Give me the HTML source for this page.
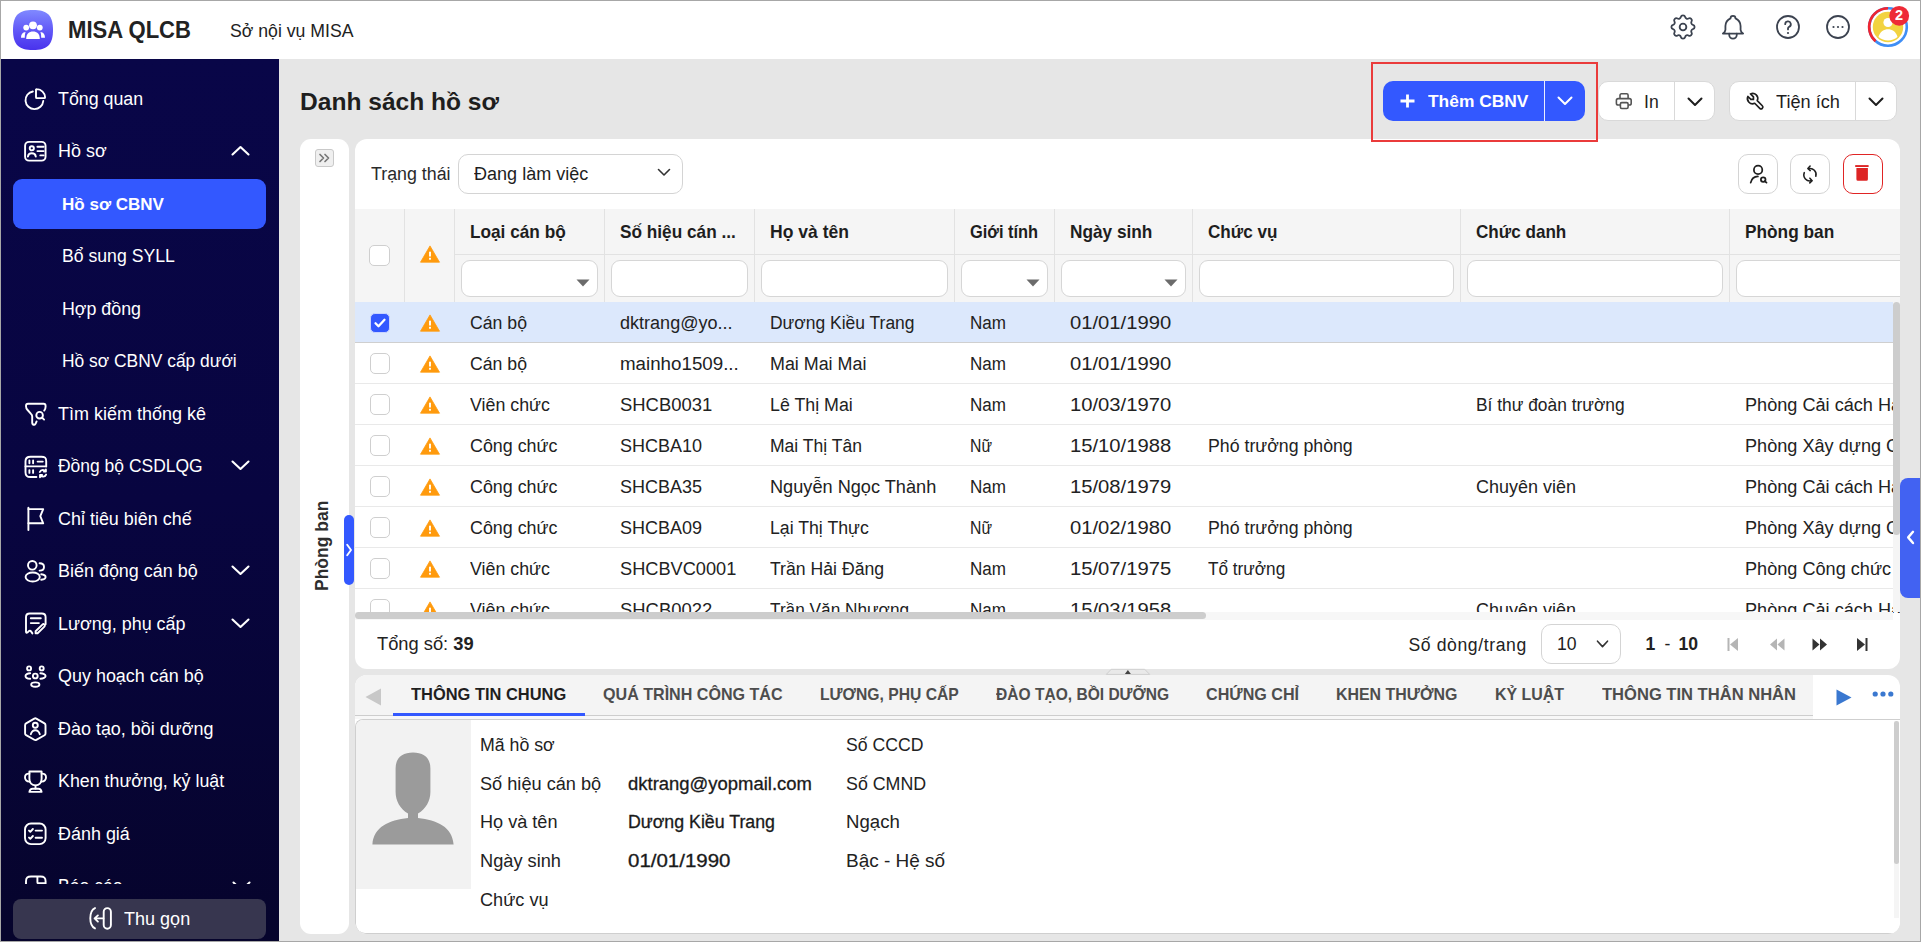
<!DOCTYPE html>
<html><head><meta charset="utf-8"><style>
html,body{margin:0;padding:0;}
body{width:1921px;height:942px;position:relative;overflow:hidden;background:#a7a7a7;font-family:"Liberation Sans",sans-serif;}
.a{position:absolute;box-sizing:border-box;}
.t{position:absolute;white-space:nowrap;line-height:1;}
svg.a{overflow:visible;}
</style></head><body>
<div class="a" style="left:1px;top:1px;width:1919px;height:940px;background:#e6e6e6;"></div>
<div class="a" style="left:1px;top:1px;width:1919px;height:58px;background:#ffffff;"></div>
<div class="a" style="left:1px;top:59px;width:278px;height:882px;background:linear-gradient(180deg,#090648 0%,#080540 50%,#06042c 100%);"></div>
<svg class="a" style="left:13px;top:10px;" width="40" height="40" viewBox="0 0 40 40"><defs><linearGradient id="lg" x1="0" y1="0" x2="0" y2="1"><stop offset="0" stop-color="#8089ff"/><stop offset="0.6" stop-color="#5c50f6"/><stop offset="1" stop-color="#4932ec"/></linearGradient></defs><path d="M20 0C5.5 0 0 5.5 0 20S5.5 40 20 40 40 34.5 40 20 34.5 0 20 0Z" fill="url(#lg)"/></svg>
<svg class="a" style="left:13px;top:10px;" width="40" height="40" viewBox="0 0 40 40"><g fill="#fff"><circle cx="20" cy="15.3" r="3.9"/><circle cx="13.2" cy="17.6" r="2.9"/><circle cx="26.8" cy="17.6" r="2.9"/><path d="M13.2 29 C13.2 23.5 16 21.4 20 21.4 C24 21.4 26.8 23.5 26.8 29 Z"/><path d="M8 27.8 C8 24.4 9.4 22.4 12.6 22 C12 23.5 11.8 25.4 11.8 27.8 Z"/><path d="M32 27.8 C32 24.4 30.6 22.4 27.4 22 C28 23.5 28.2 25.4 28.2 27.8 Z"/></g></svg>
<div class="t" style="left:68.3px;top:18.93px;font-size:23px;font-weight:700;color:#222;transform:scaleX(0.9593);transform-origin:0 0;">MISA QLCB</div>
<div class="t" style="left:229.5px;top:21.76px;font-size:18px;font-weight:400;color:#222;transform:scaleX(0.9812);transform-origin:0 0;">Sở nội vụ MISA</div>
<svg class="a" style="left:1671px;top:15px;" width="24" height="24" viewBox="2.7 2.7 18.6 18.6"><g fill="none" stroke="#3c4350" stroke-width="1.4" stroke-linecap="round" stroke-linejoin="round"><path d="M10.325 4.317c.426 -1.756 2.924 -1.756 3.35 0a1.724 1.724 0 0 0 2.573 1.066c1.543 -.94 3.31 .826 2.37 2.37a1.724 1.724 0 0 0 1.065 2.572c1.756 .426 1.756 2.924 0 3.35a1.724 1.724 0 0 0 -1.066 2.573c.94 1.543 -.826 3.31 -2.37 2.37a1.724 1.724 0 0 0 -2.572 1.065c-.426 1.756 -2.924 1.756 -3.35 0a1.724 1.724 0 0 0 -2.573 -1.066c-1.543 .94 -3.31 -.826 -2.37 -2.37a1.724 1.724 0 0 0 -1.065 -2.572c-1.756 -.426 -1.756 -2.924 0 -3.35a1.724 1.724 0 0 0 1.066 -2.573c-.94 -1.543 .826 -3.31 2.37 -2.37c1 .608 2.296 .07 2.572 -1.065z"/><circle cx="12" cy="12" r="2.6"/></g></svg>
<svg class="a" style="left:1722px;top:15px;" width="22" height="24.5" viewBox="3.3 2.3 17.4 19.4"><g fill="none" stroke="#3c4350" stroke-width="1.42" stroke-linejoin="round" stroke-linecap="round"><path d="M10 5a2 2 0 1 1 4 0a7 7 0 0 1 4 6v3a4 4 0 0 0 2 3h-16a4 4 0 0 0 2 -3v-3a7 7 0 0 1 4 -6"/><path d="M9 17v1a3 3 0 0 0 6 0v-1"/></g></svg>
<svg class="a" style="left:1776px;top:15px;" width="24" height="24" viewBox="0 0 24 24"><g fill="none" stroke="#3c4350" stroke-width="1.8" stroke-linecap="round"><circle cx="12" cy="12" r="11"/><path d="M9.2 9.2 a2.8 2.8 0 1 1 3.9 2.6 c-0.8 0.4 -1.1 1 -1.1 1.8 v0.8"/></g><circle cx="12" cy="18" r="1.1" fill="#3c4350"/></svg>
<svg class="a" style="left:1826px;top:15px;" width="24" height="24" viewBox="0 0 24 24"><circle cx="12" cy="12" r="11" fill="none" stroke="#3c4350" stroke-width="1.8"/><g fill="#3c4350"><circle cx="7.5" cy="12" r="1.1"/><circle cx="12" cy="12" r="1.1"/><circle cx="16.5" cy="12" r="1.1"/></g></svg>
<svg class="a" style="left:1867px;top:6px;" width="42" height="42" viewBox="0 0 42 42"><circle cx="21" cy="21" r="18.8" fill="none" stroke="#3f8ef5" stroke-width="2.6"/><path d="M21 2.2 A18.8 18.8 0 0 0 8.6 35.2" fill="none" stroke="#f02530" stroke-width="2.6"/><circle cx="21" cy="21" r="15.2" fill="#f2d340"/><circle cx="21" cy="16.5" r="4.6" fill="#fff"/><path d="M11.5 31 C13 25.5 17 23.3 21 23.3 C25 23.3 29 25.5 30.5 31 A15 15 0 0 1 11.5 31 Z" fill="#fff"/><circle cx="32.2" cy="9.8" r="9.9" fill="#ee2a37"/></svg>
<div class="t" style="left:1895px;top:8.33px;font-size:14.5px;font-weight:700;color:#fff;">2</div>
<div class="a" style="left:13px;top:179px;width:253px;height:50px;border-radius:9px;background:#3358ff;"></div>
<div class="t" style="left:58px;top:90.70px;font-size:17.6px;font-weight:400;color:#fff;transform:scaleX(1.0122);transform-origin:0 0;">Tổng quan</div>
<div class="t" style="left:58px;top:143.20px;font-size:17.6px;font-weight:400;color:#fff;transform:scaleX(1.02);transform-origin:0 0;">Hồ sơ</div>
<div class="t" style="left:61.6px;top:196.12px;font-size:17.1px;font-weight:700;color:#fff;transform:scaleX(0.9958);transform-origin:0 0;">Hồ sơ CBNV</div>
<div class="t" style="left:62.2px;top:248.20px;font-size:17.6px;font-weight:400;color:#fff;transform:scaleX(1.0026);transform-origin:0 0;">Bổ sung SYLL</div>
<div class="t" style="left:62.2px;top:300.70px;font-size:17.6px;font-weight:400;color:#fff;transform:scaleX(1.0115);transform-origin:0 0;">Hợp đồng</div>
<div class="t" style="left:62.2px;top:353.20px;font-size:17.6px;font-weight:400;color:#fff;transform:scaleX(0.9892);transform-origin:0 0;">Hồ sơ CBNV cấp dưới</div>
<div class="t" style="left:58px;top:405.70px;font-size:17.6px;font-weight:400;color:#fff;transform:scaleX(1.0224);transform-origin:0 0;">Tìm kiếm thống kê</div>
<div class="t" style="left:58px;top:458.20px;font-size:17.6px;font-weight:400;color:#fff;transform:scaleX(0.9926);transform-origin:0 0;">Đồng bộ CSDLQG</div>
<div class="t" style="left:58px;top:510.70px;font-size:17.6px;font-weight:400;color:#fff;transform:scaleX(1.02);transform-origin:0 0;">Chỉ tiêu biên chế</div>
<div class="t" style="left:58px;top:563.20px;font-size:17.6px;font-weight:400;color:#fff;transform:scaleX(1.02);transform-origin:0 0;">Biến động cán bộ</div>
<div class="t" style="left:58px;top:615.70px;font-size:17.6px;font-weight:400;color:#fff;transform:scaleX(1.02);transform-origin:0 0;">Lương, phụ cấp</div>
<div class="t" style="left:58px;top:668.20px;font-size:17.6px;font-weight:400;color:#fff;transform:scaleX(1.02);transform-origin:0 0;">Quy hoạch cán bộ</div>
<div class="t" style="left:58px;top:720.70px;font-size:17.6px;font-weight:400;color:#fff;transform:scaleX(1.02);transform-origin:0 0;">Đào tạo, bồi dưỡng</div>
<div class="t" style="left:58px;top:773.20px;font-size:17.6px;font-weight:400;color:#fff;transform:scaleX(1.0121);transform-origin:0 0;">Khen thưởng, kỷ luật</div>
<div class="t" style="left:58px;top:825.70px;font-size:17.6px;font-weight:400;color:#fff;transform:scaleX(1.02);transform-origin:0 0;">Đánh giá</div>
<div class="a" style="left:1px;top:59px;width:278px;height:825px;overflow:hidden;">
<div class="t" style="left:57px;top:819.20px;font-size:17.6px;font-weight:400;color:#fff;">Báo cáo</div>
<svg class="a" style="left:22px;top:814.1px;" width="24" height="24" viewBox="0 0 24 24"><g fill="none" stroke="#fff" stroke-width="1.9" stroke-linecap="round" stroke-linejoin="round"><path d="M3 24 V8.2 C3 4.4 4.6 3.5 8 3.5 H17.6 C21 3.5 22.6 4.4 22.6 8.2 V24"/><path d="M14.4 4 V9.2 C14.4 9.8 14.8 10.2 15.4 10.2 H22"/></g></svg>
<svg class="a" style="left:231px;top:821.6px;" width="19" height="11" viewBox="0 0 19 11"><path d="M1.5 1.5 L9.5 9 L17.5 1.5" fill="none" stroke="#fff" stroke-width="2" stroke-linecap="round" stroke-linejoin="round"/></svg>
</div>
<svg class="a" style="left:231px;top:145.1px;" width="19" height="11" viewBox="0 0 19 11"><path d="M1.5 9.5 L9.5 2 L17.5 9.5" fill="none" stroke="#fff" stroke-width="2.1" stroke-linecap="round" stroke-linejoin="round"/></svg>
<svg class="a" style="left:231px;top:460.1px;" width="19" height="11" viewBox="0 0 19 11"><path d="M1.5 1.5 L9.5 9 L17.5 1.5" fill="none" stroke="#fff" stroke-width="2.1" stroke-linecap="round" stroke-linejoin="round"/></svg>
<svg class="a" style="left:231px;top:565.1px;" width="19" height="11" viewBox="0 0 19 11"><path d="M1.5 1.5 L9.5 9 L17.5 1.5" fill="none" stroke="#fff" stroke-width="2.1" stroke-linecap="round" stroke-linejoin="round"/></svg>
<svg class="a" style="left:231px;top:617.6px;" width="19" height="11" viewBox="0 0 19 11"><path d="M1.5 1.5 L9.5 9 L17.5 1.5" fill="none" stroke="#fff" stroke-width="2.1" stroke-linecap="round" stroke-linejoin="round"/></svg>
<svg class="a" style="left:23px;top:85.6px;" width="24" height="24" viewBox="0 0 24 24"><g fill="none" stroke="#fff" stroke-width="1.9" stroke-linecap="round" stroke-linejoin="round"><path d="M9.85 5.44 A8.9 8.9 0 1 0 20.27 14.98"/><path d="M13 3.5 V11.2 a0.9 0.9 0 0 0 0.9 0.9 H21.2 a0.9 0.9 0 0 0 0.9-0.9 A8.6 8.6 0 0 0 13.9 3.1 a0.9 0.9 0 0 0-0.9 0.4z"/></g></svg>
<svg class="a" style="left:23px;top:138.1px;" width="24" height="24" viewBox="0 0 24 24"><g fill="none" stroke="#fff" stroke-width="1.9" stroke-linecap="round" stroke-linejoin="round"><rect x="2.1" y="3.85" width="20.45" height="18.8" rx="4"/><circle cx="8.8" cy="10.3" r="2.1"/><path d="M4.9 18.6 C5.2 16.4 6.8 15.3 8.85 15.3 S12.5 16.4 12.8 18.6"/><path d="M14.4 8.8h6.2M14.4 13.1h6.2M17.3 17.4h3.3"/></g></svg>
<svg class="a" style="left:23px;top:400.6px;" width="24" height="24" viewBox="0 0 24 24"><g fill="none" stroke="#fff" stroke-width="1.9" stroke-linecap="round" stroke-linejoin="round"><path d="M13.6 20.4 C12.8 22.6 12.2 23.8 11.4 23.8 C10 23.8 9.2 22.8 9.2 21.4 V15.4 C9.2 14.4 8.8 13.6 8 12.8 L4.6 9 C3.6 7.9 3 6.8 3 5.2 V5 C3 3.7 3.8 2.8 5 2.8 H20.6 C21.8 2.8 22.6 3.7 22.6 5 V5.4 C22.6 7 22.2 8.4 21.2 9.6"/><circle cx="16.6" cy="14.2" r="3.3"/><path d="M19.2 16.8 L21.1 18.6"/></g></svg>
<svg class="a" style="left:23px;top:453.1px;" width="24" height="24" viewBox="0 0 24 24"><g fill="none" stroke="#fff" stroke-width="1.9" stroke-linecap="round" stroke-linejoin="round"><path d="M13.4 24.0 H7.4 C4 24 2.5 22.5 2.5 19.2 V8.2 C2.5 4.6 4.2 3.7 7.6 3.7 H18.4 C21.8 3.7 23.2 4.6 23.2 8.2 V13.4"/><path d="M2.5 13.4 H23.2"/><path d="M6.4 7.4v2.8M10.1 7.4v2.8M14.6 8.6h5.2M6.4 17.1v2.8M10.1 17.1v2.8"/><path d="M16.8 19.0 C17.4 17.6 18.4 17 19.8 17 C21 17 21.9 17.4 22.6 18.2 M22.9 16.4 V18.6 H20.8"/><path d="M23.1 21.6 C22.5 23 21.5 23.6 20.1 23.6 C18.9 23.6 18 23.2 17.3 22.4 M17 24.2 V22 H19.1"/></g></svg>
<svg class="a" style="left:23px;top:505.6px;" width="24" height="24" viewBox="0 0 24 24"><g fill="none" stroke="#fff" stroke-width="1.9" stroke-linecap="round" stroke-linejoin="round"><path d="M5.4 24V1.8"/><path d="M5.4 3.1H20.2L17.3 10.2L20.2 17.3H5.4"/></g></svg>
<svg class="a" style="left:23px;top:558.1px;" width="24" height="24" viewBox="0 0 24 24"><g fill="none" stroke="#fff" stroke-width="1.9" stroke-linecap="round" stroke-linejoin="round"><circle cx="9.3" cy="7.3" r="4.3"/><ellipse cx="9.7" cy="19.0" rx="7.1" ry="4.5"/><path d="M16.6 5.2 C19.4 5.2 21 6.6 21 8.9 C21 11.2 19.4 12.6 16.6 12.6"/><path d="M18.2 16.2 C21.2 16.6 22.6 17.6 22.6 19.0 C22.6 20.4 21.2 21.4 18.2 21.8"/></g></svg>
<svg class="a" style="left:23px;top:610.6px;" width="24" height="24" viewBox="0 0 24 24"><g fill="none" stroke="#fff" stroke-width="1.9" stroke-linecap="round" stroke-linejoin="round"><path d="M22.6 13.2 V6.0 C22.6 3.4 21.4 2.5 18.8 2.5 H6.8 C4.2 2.5 3 3.4 3 6.0 V20.6 C3 21.8 3.6 22.2 4.4 21.6 L5.8 20.2 C6.6 19.4 7.6 19.6 8.2 20.6 L9.4 22.4"/><path d="M7.8 7.3h10M7.8 12.1h8.1"/><path d="M14.6 22.2 L21.4 15.6 C22 15 22 14.2 21.4 13.6 C20.8 13 20 13 19.4 13.6 L12.6 20.2 V22.2 Z"/></g></svg>
<svg class="a" style="left:23px;top:663.1px;" width="24" height="24" viewBox="0 0 24 24"><g fill="none" stroke="#fff" stroke-width="1.9" stroke-linecap="round" stroke-linejoin="round"><circle cx="6.1" cy="5.4" r="2.0"/><circle cx="18.7" cy="5.4" r="2.0"/><circle cx="12.3" cy="13.0" r="2.4"/><ellipse cx="12.3" cy="21.6" rx="4.1" ry="2.2"/><path d="M7.2 10.3 C4.4 10.3 2.5 11.6 2.5 13.0 C2.5 14.4 4.4 15.7 7.2 15.7"/><path d="M17.4 10.3 C20.2 10.3 22.6 11.6 22.6 13.0 C22.6 14.4 20.2 15.7 17.4 15.7"/></g></svg>
<svg class="a" style="left:23px;top:715.6px;" width="24" height="24" viewBox="0 0 24 24"><g fill="none" stroke="#fff" stroke-width="1.9" stroke-linecap="round" stroke-linejoin="round"><path d="M11.3 2.6 C12 2.2 12.6 2.2 13.3 2.6 L21.5 7.4 C22.2 7.8 22.5 8.4 22.5 9.2 V17.4 C22.5 18.2 22.2 18.8 21.5 19.2 L13.3 23.8 C12.6 24.2 12 24.2 11.3 23.8 L3.1 19.2 C2.4 18.8 2.1 18.2 2.1 17.4 V9.2 C2.1 8.4 2.4 7.8 3.1 7.4 Z"/><circle cx="12.3" cy="9.3" r="2.5"/><path d="M7.8 18.2 C8.6 15.6 10.2 14.2 12.3 14.2 C14.4 14.2 16 15.6 16.8 18.2"/></g></svg>
<svg class="a" style="left:23px;top:768.1px;" width="24" height="24" viewBox="0 0 24 24"><g fill="none" stroke="#fff" stroke-width="1.9" stroke-linecap="round" stroke-linejoin="round"><path d="M6.4 3.5 H18.6 V10.8 C18.6 15 16 17.4 12.5 17.4 C9 17.4 6.4 15 6.4 10.8 Z"/><path d="M6.4 5.6 C3.4 5.4 2 6.8 2 9.2 C2 11.6 3.4 13.4 6.6 13.6"/><path d="M18.6 5.6 C21.6 5.4 23 6.8 23 9.2 C23 11.6 21.6 13.4 18.4 13.6"/><path d="M12.5 17.6 V20.6"/><path d="M6.4 23.9 C6.8 21.8 7.8 20.8 9.6 20.8 H15.4 C17.2 20.8 18.2 21.8 18.6 23.9 Z"/></g></svg>
<svg class="a" style="left:23px;top:820.6px;" width="24" height="24" viewBox="0 0 24 24"><g fill="none" stroke="#fff" stroke-width="1.9" stroke-linecap="round" stroke-linejoin="round"><rect x="2.0" y="2.5" width="20.6" height="20.6" rx="6"/><path d="M6.0 9.6l1.3 1.2 2.6-2.8M6.0 16.6l1.3 1.2 2.6-2.8"/><path d="M12.6 9.6h6.4M12.6 16.7h6.4"/></g></svg>
<div class="a" style="left:13px;top:899px;width:253px;height:40px;border-radius:8px;background:#37364f;"></div>
<svg class="a" style="left:88px;top:905px;" width="26" height="27" viewBox="0 0 26 27"><g fill="none" stroke="#fff" stroke-width="1.9" stroke-linecap="round" stroke-linejoin="round"><path d="M7 3.1 C4.2 4.4 2.3 7.8 2.3 13.2 C2.3 18.6 4.2 22 7 23.4"/><rect x="15.7" y="3.1" width="7.2" height="20.6" rx="3.6"/><path d="M15.4 13.4 H6.6 M9.9 10.4 L6.6 13.4 L9.9 16.6"/></g></svg>
<div class="t" style="left:124px;top:911.10px;font-size:17.6px;font-weight:400;color:#fff;transform:scaleX(1.0249);transform-origin:0 0;">Thu gọn</div>
<div class="t" style="left:299.5px;top:90.46px;font-size:24.5px;font-weight:700;color:#1e1e1e;transform:scaleX(1.0025);transform-origin:0 0;">Danh sách hồ sơ</div>
<div class="a" style="left:1371px;top:62px;width:227px;height:80px;border:2px solid #ea3b3b;z-index:10;"></div>
<div class="a" style="left:1383px;top:81px;width:202px;height:40px;border-radius:10px;background:#3358ff;"></div>
<div class="a" style="left:1544px;top:81px;width:1px;height:40px;background:#ffffff;opacity:.9;"></div>
<svg class="a" style="left:1399px;top:93px;" width="17" height="16" viewBox="0 0 17 16"><path d="M8.5 1.5v13M1.5 8h14" stroke="#fff" stroke-width="2.8" stroke-linecap="butt"/></svg>
<div class="t" style="left:1428px;top:93.44px;font-size:17.2px;font-weight:700;color:#fff;transform:scaleX(1.0113);transform-origin:0 0;">Thêm CBNV</div>
<svg class="a" style="left:1557px;top:96px;" width="16" height="10" viewBox="0 0 16 10"><path d="M1.5 1.5L8 8l6.5-6.5" fill="none" stroke="#fff" stroke-width="2" stroke-linecap="round" stroke-linejoin="round"/></svg>
<div class="a" style="left:1598px;top:81px;width:117px;height:40px;border-radius:10px;background:#fff;border:1px solid #d9d9d9;"></div>
<div class="a" style="left:1674px;top:82px;width:1px;height:38px;background:#d9d9d9;"></div>
<svg class="a" style="left:1614px;top:91px;" width="20" height="20" viewBox="0 0 20 20"><g fill="none" stroke="#555" stroke-width="1.6" stroke-linejoin="round"><path d="M6 7V4.2a1.4 1.4 0 0 1 1.4-1.4h5.3a1.4 1.4 0 0 1 1.4 1.4V7"/><path d="M6.2 14H4.2a1.8 1.8 0 0 1-1.8-1.8V9.4a1.8 1.8 0 0 1 1.8-1.8h11.2a1.8 1.8 0 0 1 1.8 1.8v2.8a1.8 1.8 0 0 1-1.8 1.8h-1.4"/><rect x="6.4" y="11.6" width="7.7" height="5.9" rx="1.4" fill="#fff"/></g></svg>
<div class="t" style="left:1644px;top:94.10px;font-size:17.6px;font-weight:400;color:#1e1e1e;">In</div>
<svg class="a" style="left:1687px;top:97px;" width="16" height="10" viewBox="0 0 16 10"><path d="M1.5 1.5L8 8l6.5-6.5" fill="none" stroke="#1e1e1e" stroke-width="2" stroke-linecap="round" stroke-linejoin="round"/></svg>
<div class="a" style="left:1729px;top:81px;width:168px;height:40px;border-radius:10px;background:#fff;border:1px solid #d9d9d9;"></div>
<div class="a" style="left:1855px;top:82px;width:1px;height:38px;background:#d9d9d9;"></div>
<svg class="a" style="left:1744.9px;top:91.3px;" width="20.26" height="20.26" viewBox="0 0 24 24"><path d="M7 10h3v-3l-3.5 -3.5a6 6 0 0 1 8 8l6 6a2 2 0 0 1 -3 3l-6 -6a6 6 0 0 1 -8 -8l3.5 3.5" fill="none" stroke="#1f1f1f" stroke-width="2" stroke-linecap="round" stroke-linejoin="round"/></svg>
<div class="t" style="left:1775.5px;top:94.10px;font-size:17.6px;font-weight:400;color:#1e1e1e;transform:scaleX(1.0331);transform-origin:0 0;">Tiện ích</div>
<svg class="a" style="left:1868px;top:97px;" width="16" height="10" viewBox="0 0 16 10"><path d="M1.5 1.5L8 8l6.5-6.5" fill="none" stroke="#1e1e1e" stroke-width="2" stroke-linecap="round" stroke-linejoin="round"/></svg>
<div class="a" style="left:300px;top:139px;width:49px;height:795px;border-radius:11px;background:#fff;"></div>
<div class="a" style="left:315px;top:149px;width:19px;height:18px;border-radius:3px;background:#efefef;border:1px solid #c9c9c9;"></div>
<svg class="a" style="left:317px;top:152px;" width="15" height="12" viewBox="0 0 15 12"><path d="M3 2.5l3.5 3.5L3 9.5M8 2.5l3.5 3.5L8 9.5" fill="none" stroke="#777" stroke-width="1.7" stroke-linecap="round" stroke-linejoin="round"/></svg>
<div class="t" style="left:278px;top:537px;width:90px;text-align:center;font-size:17.5px;font-weight:700;color:#2e2e2e;transform:rotate(-90deg);transform-origin:45px 9px;">Phòng ban</div>
<div class="a" style="left:355px;top:139px;width:1545px;height:530px;border-radius:12px;background:#fff;overflow:hidden;">
</div>
<div class="t" style="left:371px;top:165.80px;font-size:17.6px;font-weight:400;color:#2a2a2a;transform:scaleX(1.0129);transform-origin:0 0;">Trạng thái</div>
<div class="a" style="left:458px;top:154px;width:225px;height:40px;border-radius:10px;background:#fff;border:1px solid #d4d4d4;"></div>
<div class="t" style="left:473.7px;top:166.10px;font-size:17.6px;font-weight:400;color:#1e1e1e;transform:scaleX(1.0251);transform-origin:0 0;">Đang làm việc</div>
<svg class="a" style="left:657px;top:168px;" width="14" height="9" viewBox="0 0 14 9"><path d="M1.5 1.5L7 7l5.5-5.5" fill="none" stroke="#333" stroke-width="1.6" stroke-linecap="round" stroke-linejoin="round"/></svg>
<div class="a" style="left:1738px;top:154px;width:40px;height:40px;border-radius:10px;background:#fff;border:1px solid #d4d4d4;"></div>
<div class="a" style="left:1790px;top:154px;width:40px;height:40px;border-radius:10px;background:#fff;border:1px solid #d4d4d4;"></div>
<div class="a" style="left:1843px;top:154px;width:40px;height:40px;border-radius:10px;background:#fff;border:1.5px solid #e02424;"></div>
<svg class="a" style="left:1748px;top:164px;" width="20" height="20" viewBox="0 0 20 20"><g fill="none" stroke="#1f1f1f" stroke-width="1.75" stroke-linecap="round"><circle cx="10.1" cy="5.9" r="4.2"/><path d="M2.7 18.6 C3.6 14.8 6.4 12.5 9.9 12.4"/><circle cx="15.2" cy="15.6" r="2.3"/><path d="M16.9 17.3 L18.5 18.6"/></g></svg>
<svg class="a" style="left:1800px;top:164px;" width="20" height="20" viewBox="0 0 20 20"><g fill="none" stroke="#1f1f1f" stroke-width="1.55" stroke-linecap="round" stroke-linejoin="round"><path d="M8.4 4.7 A6 6 0 0 1 15.8 12.2"/><path d="M10.1 2 L7.9 4.5 L10.2 6.6"/><path d="M4.3 8.6 A6 6 0 0 0 11.6 16.6"/><path d="M9.9 14.2 L12.1 16.7 L9.8 18.9"/></g></svg>
<svg class="a" style="left:1853px;top:164px;" width="20" height="20" viewBox="0 0 20 20"><g fill="#dd2424"><rect x="2.2" y="1.1" width="13.4" height="1.9"/><path d="M3.4 4h11.5v11.3a1.5 1.5 0 0 1-1.5 1.5h-8.5a1.5 1.5 0 0 1-1.5-1.5z"/></g></svg>
<div class="a" style="left:355px;top:209px;width:1545px;height:93px;background:#f5f5f5;"></div>
<div class="a" style="left:404px;top:209px;width:1px;height:93px;background:#e2e2e2;"></div>
<div class="a" style="left:454px;top:209px;width:1px;height:93px;background:#e2e2e2;"></div>
<div class="a" style="left:604px;top:209px;width:1px;height:93px;background:#e2e2e2;"></div>
<div class="a" style="left:754px;top:209px;width:1px;height:93px;background:#e2e2e2;"></div>
<div class="a" style="left:954px;top:209px;width:1px;height:93px;background:#e2e2e2;"></div>
<div class="a" style="left:1054px;top:209px;width:1px;height:93px;background:#e2e2e2;"></div>
<div class="a" style="left:1192px;top:209px;width:1px;height:93px;background:#e2e2e2;"></div>
<div class="a" style="left:1460px;top:209px;width:1px;height:93px;background:#e2e2e2;"></div>
<div class="a" style="left:1729px;top:209px;width:1px;height:93px;background:#e2e2e2;"></div>
<div class="a" style="left:454px;top:254px;width:1446px;height:1px;background:#e2e2e2;"></div>
<div class="a" style="left:369px;top:245px;width:21px;height:21px;border-radius:5px;background:#fff;border:1px solid #cfcfcf;"></div>
<svg class="a" style="left:420px;top:245px;" width="20" height="18" viewBox="0 0 20 18"><path d="M10 0.9L19.5 17.2H0.5Z" fill="#ff9a0d" stroke="#ff9a0d" stroke-width="0.8" stroke-linejoin="round"/><rect x="9.05" y="6.7" width="1.9" height="4.8" fill="#fff"/><rect x="9.05" y="12.8" width="1.9" height="1.9" fill="#fff"/></svg>
<div class="a" style="left:355px;top:209px;width:1545px;height:404px;overflow:hidden;">
<div class="t" style="left:115px;top:14.93px;font-size:17.8px;font-weight:700;color:#1e1e1e;transform:scaleX(0.9684);transform-origin:0 0;">Loại cán bộ</div>
<div class="t" style="left:265px;top:14.93px;font-size:17.8px;font-weight:700;color:#1e1e1e;transform:scaleX(0.9690);transform-origin:0 0;">Số hiệu cán ...</div>
<div class="t" style="left:415px;top:14.93px;font-size:17.8px;font-weight:700;color:#1e1e1e;transform:scaleX(0.9863);transform-origin:0 0;">Họ và tên</div>
<div class="t" style="left:615px;top:14.93px;font-size:17.8px;font-weight:700;color:#1e1e1e;transform:scaleX(0.9221);transform-origin:0 0;">Giới tính</div>
<div class="t" style="left:715px;top:14.93px;font-size:17.8px;font-weight:700;color:#1e1e1e;transform:scaleX(0.9696);transform-origin:0 0;">Ngày sinh</div>
<div class="t" style="left:853px;top:14.93px;font-size:17.8px;font-weight:700;color:#1e1e1e;transform:scaleX(0.9623);transform-origin:0 0;">Chức vụ</div>
<div class="t" style="left:1121px;top:14.93px;font-size:17.8px;font-weight:700;color:#1e1e1e;transform:scaleX(0.9619);transform-origin:0 0;">Chức danh</div>
<div class="t" style="left:1390px;top:14.93px;font-size:17.8px;font-weight:700;color:#1e1e1e;transform:scaleX(0.9713);transform-origin:0 0;">Phòng ban</div>
<div class="a" style="left:106px;top:51px;width:137px;height:37px;border-radius:9px;background:#fff;border:1px solid #d6d6d6;"></div>
<svg class="a" style="left:221px;top:70px;" width="14" height="8" viewBox="0 0 14 8"><path d="M0.5 0.5h13L7 7.5z" fill="#6b6b6b"/></svg>
<div class="a" style="left:256px;top:51px;width:137px;height:37px;border-radius:9px;background:#fff;border:1px solid #d6d6d6;"></div>
<div class="a" style="left:406px;top:51px;width:187px;height:37px;border-radius:9px;background:#fff;border:1px solid #d6d6d6;"></div>
<div class="a" style="left:606px;top:51px;width:87px;height:37px;border-radius:9px;background:#fff;border:1px solid #d6d6d6;"></div>
<svg class="a" style="left:671px;top:70px;" width="14" height="8" viewBox="0 0 14 8"><path d="M0.5 0.5h13L7 7.5z" fill="#6b6b6b"/></svg>
<div class="a" style="left:706px;top:51px;width:125px;height:37px;border-radius:9px;background:#fff;border:1px solid #d6d6d6;"></div>
<svg class="a" style="left:809px;top:70px;" width="14" height="8" viewBox="0 0 14 8"><path d="M0.5 0.5h13L7 7.5z" fill="#6b6b6b"/></svg>
<div class="a" style="left:844px;top:51px;width:255px;height:37px;border-radius:9px;background:#fff;border:1px solid #d6d6d6;"></div>
<div class="a" style="left:1112px;top:51px;width:256px;height:37px;border-radius:9px;background:#fff;border:1px solid #d6d6d6;"></div>
<div class="a" style="left:1381px;top:51px;width:224px;height:37px;border-radius:9px;background:#fff;border:1px solid #d6d6d6;"></div>
<div class="a" style="left:0px;top:93px;width:1545px;height:41px;background:#dce8fc;border-bottom:1px solid #cfcfcf;"></div>
<div class="a" style="left:15px;top:104px;width:20px;height:20px;border-radius:5px;background:#3358ff;border:1px solid #c9d3ff;"></div>
<svg class="a" style="left:19px;top:108px;" width="12" height="12" viewBox="0 0 12 12"><path d="M1.5 6.2l3 3 6-6.4" fill="none" stroke="#fff" stroke-width="2.3" stroke-linecap="round" stroke-linejoin="round"/></svg>
<svg class="a" style="left:65px;top:105.2px;" width="20" height="18" viewBox="0 0 20 18"><path d="M10 0.9L19.5 17.2H0.5Z" fill="#ff9a0d" stroke="#ff9a0d" stroke-width="0.8" stroke-linejoin="round"/><rect x="9.05" y="6.7" width="1.9" height="4.8" fill="#fff"/><rect x="9.05" y="12.8" width="1.9" height="1.9" fill="#fff"/></svg>
<div class="t" style="left:115px;top:106.30px;font-size:17.6px;font-weight:400;color:#222;transform:scaleX(1.0042);transform-origin:0 0;">Cán bộ</div>
<div class="t" style="left:265px;top:106.30px;font-size:17.6px;font-weight:400;color:#222;transform:scaleX(1.0253);transform-origin:0 0;">dktrang@yo...</div>
<div class="t" style="left:415px;top:106.30px;font-size:17.6px;font-weight:400;color:#222;transform:scaleX(0.9929);transform-origin:0 0;">Dương Kiều Trang</div>
<div class="t" style="left:615px;top:106.30px;font-size:17.6px;font-weight:400;color:#222;transform:scaleX(0.9683);transform-origin:0 0;">Nam</div>
<div class="t" style="left:715px;top:106.30px;font-size:17.6px;font-weight:400;color:#222;transform:scaleX(1.1489);transform-origin:0 0;">01/01/1990</div>
<div class="a" style="left:0px;top:174px;width:1545px;height:1px;background:#e9e9e9;"></div>
<div class="a" style="left:15px;top:144px;width:20px;height:21px;border-radius:5px;background:#fff;border:1px solid #cfcfcf;"></div>
<svg class="a" style="left:65px;top:146.2px;" width="20" height="18" viewBox="0 0 20 18"><path d="M10 0.9L19.5 17.2H0.5Z" fill="#ff9a0d" stroke="#ff9a0d" stroke-width="0.8" stroke-linejoin="round"/><rect x="9.05" y="6.7" width="1.9" height="4.8" fill="#fff"/><rect x="9.05" y="12.8" width="1.9" height="1.9" fill="#fff"/></svg>
<div class="t" style="left:115px;top:147.30px;font-size:17.6px;font-weight:400;color:#222;transform:scaleX(1.0042);transform-origin:0 0;">Cán bộ</div>
<div class="t" style="left:265px;top:147.30px;font-size:17.6px;font-weight:400;color:#222;transform:scaleX(1.0651);transform-origin:0 0;">mainho1509...</div>
<div class="t" style="left:415px;top:147.30px;font-size:17.6px;font-weight:400;color:#222;transform:scaleX(1.0162);transform-origin:0 0;">Mai Mai Mai</div>
<div class="t" style="left:615px;top:147.30px;font-size:17.6px;font-weight:400;color:#222;transform:scaleX(0.9683);transform-origin:0 0;">Nam</div>
<div class="t" style="left:715px;top:147.30px;font-size:17.6px;font-weight:400;color:#222;transform:scaleX(1.1489);transform-origin:0 0;">01/01/1990</div>
<div class="a" style="left:0px;top:215px;width:1545px;height:1px;background:#e9e9e9;"></div>
<div class="a" style="left:15px;top:185px;width:20px;height:21px;border-radius:5px;background:#fff;border:1px solid #cfcfcf;"></div>
<svg class="a" style="left:65px;top:187.2px;" width="20" height="18" viewBox="0 0 20 18"><path d="M10 0.9L19.5 17.2H0.5Z" fill="#ff9a0d" stroke="#ff9a0d" stroke-width="0.8" stroke-linejoin="round"/><rect x="9.05" y="6.7" width="1.9" height="4.8" fill="#fff"/><rect x="9.05" y="12.8" width="1.9" height="1.9" fill="#fff"/></svg>
<div class="t" style="left:115px;top:188.30px;font-size:17.6px;font-weight:400;color:#222;transform:scaleX(1.0129);transform-origin:0 0;">Viên chức</div>
<div class="t" style="left:265px;top:188.30px;font-size:17.6px;font-weight:400;color:#222;transform:scaleX(1.0483);transform-origin:0 0;">SHCB0031</div>
<div class="t" style="left:415px;top:188.30px;font-size:17.6px;font-weight:400;color:#222;transform:scaleX(1.0117);transform-origin:0 0;">Lê Thị Mai</div>
<div class="t" style="left:615px;top:188.30px;font-size:17.6px;font-weight:400;color:#222;transform:scaleX(0.9683);transform-origin:0 0;">Nam</div>
<div class="t" style="left:715px;top:188.30px;font-size:17.6px;font-weight:400;color:#222;transform:scaleX(1.1489);transform-origin:0 0;">10/03/1970</div>
<div class="t" style="left:1121px;top:188.30px;font-size:17.6px;font-weight:400;color:#222;transform:scaleX(0.9876);transform-origin:0 0;">Bí thư đoàn trường</div>
<div class="t" style="left:1390px;top:188.30px;font-size:17.6px;font-weight:400;color:#222;transform:scaleX(1.03);transform-origin:0 0;">Phòng Cải cách Hành chính</div>
<div class="a" style="left:0px;top:256px;width:1545px;height:1px;background:#e9e9e9;"></div>
<div class="a" style="left:15px;top:226px;width:20px;height:21px;border-radius:5px;background:#fff;border:1px solid #cfcfcf;"></div>
<svg class="a" style="left:65px;top:228.2px;" width="20" height="18" viewBox="0 0 20 18"><path d="M10 0.9L19.5 17.2H0.5Z" fill="#ff9a0d" stroke="#ff9a0d" stroke-width="0.8" stroke-linejoin="round"/><rect x="9.05" y="6.7" width="1.9" height="4.8" fill="#fff"/><rect x="9.05" y="12.8" width="1.9" height="1.9" fill="#fff"/></svg>
<div class="t" style="left:115px;top:229.30px;font-size:17.6px;font-weight:400;color:#222;transform:scaleX(1.0156);transform-origin:0 0;">Công chức</div>
<div class="t" style="left:265px;top:229.30px;font-size:17.6px;font-weight:400;color:#222;transform:scaleX(1.0235);transform-origin:0 0;">SHCBA10</div>
<div class="t" style="left:415px;top:229.30px;font-size:17.6px;font-weight:400;color:#222;transform:scaleX(0.9971);transform-origin:0 0;">Mai Thị Tân</div>
<div class="t" style="left:615px;top:229.30px;font-size:17.6px;font-weight:400;color:#222;transform:scaleX(0.8977);transform-origin:0 0;">Nữ</div>
<div class="t" style="left:715px;top:229.30px;font-size:17.6px;font-weight:400;color:#222;transform:scaleX(1.1489);transform-origin:0 0;">15/10/1988</div>
<div class="t" style="left:853px;top:229.30px;font-size:17.6px;font-weight:400;color:#222;transform:scaleX(1.0076);transform-origin:0 0;">Phó trưởng phòng</div>
<div class="t" style="left:1390px;top:229.30px;font-size:17.6px;font-weight:400;color:#222;transform:scaleX(1.03);transform-origin:0 0;">Phòng Xây dựng Chính quyền</div>
<div class="a" style="left:0px;top:297px;width:1545px;height:1px;background:#e9e9e9;"></div>
<div class="a" style="left:15px;top:267px;width:20px;height:21px;border-radius:5px;background:#fff;border:1px solid #cfcfcf;"></div>
<svg class="a" style="left:65px;top:269.2px;" width="20" height="18" viewBox="0 0 20 18"><path d="M10 0.9L19.5 17.2H0.5Z" fill="#ff9a0d" stroke="#ff9a0d" stroke-width="0.8" stroke-linejoin="round"/><rect x="9.05" y="6.7" width="1.9" height="4.8" fill="#fff"/><rect x="9.05" y="12.8" width="1.9" height="1.9" fill="#fff"/></svg>
<div class="t" style="left:115px;top:270.30px;font-size:17.6px;font-weight:400;color:#222;transform:scaleX(1.0156);transform-origin:0 0;">Công chức</div>
<div class="t" style="left:265px;top:270.30px;font-size:17.6px;font-weight:400;color:#222;transform:scaleX(1.0235);transform-origin:0 0;">SHCBA35</div>
<div class="t" style="left:415px;top:270.30px;font-size:17.6px;font-weight:400;color:#222;transform:scaleX(1.0321);transform-origin:0 0;">Nguyễn Ngọc Thành</div>
<div class="t" style="left:615px;top:270.30px;font-size:17.6px;font-weight:400;color:#222;transform:scaleX(0.9683);transform-origin:0 0;">Nam</div>
<div class="t" style="left:715px;top:270.30px;font-size:17.6px;font-weight:400;color:#222;transform:scaleX(1.1489);transform-origin:0 0;">15/08/1979</div>
<div class="t" style="left:1121px;top:270.30px;font-size:17.6px;font-weight:400;color:#222;transform:scaleX(1.0229);transform-origin:0 0;">Chuyên viên</div>
<div class="t" style="left:1390px;top:270.30px;font-size:17.6px;font-weight:400;color:#222;transform:scaleX(1.03);transform-origin:0 0;">Phòng Cải cách Hành chính</div>
<div class="a" style="left:0px;top:338px;width:1545px;height:1px;background:#e9e9e9;"></div>
<div class="a" style="left:15px;top:308px;width:20px;height:21px;border-radius:5px;background:#fff;border:1px solid #cfcfcf;"></div>
<svg class="a" style="left:65px;top:310.2px;" width="20" height="18" viewBox="0 0 20 18"><path d="M10 0.9L19.5 17.2H0.5Z" fill="#ff9a0d" stroke="#ff9a0d" stroke-width="0.8" stroke-linejoin="round"/><rect x="9.05" y="6.7" width="1.9" height="4.8" fill="#fff"/><rect x="9.05" y="12.8" width="1.9" height="1.9" fill="#fff"/></svg>
<div class="t" style="left:115px;top:311.30px;font-size:17.6px;font-weight:400;color:#222;transform:scaleX(1.0156);transform-origin:0 0;">Công chức</div>
<div class="t" style="left:265px;top:311.30px;font-size:17.6px;font-weight:400;color:#222;transform:scaleX(1.0235);transform-origin:0 0;">SHCBA09</div>
<div class="t" style="left:415px;top:311.30px;font-size:17.6px;font-weight:400;color:#222;transform:scaleX(1.0060);transform-origin:0 0;">Lại Thị Thực</div>
<div class="t" style="left:615px;top:311.30px;font-size:17.6px;font-weight:400;color:#222;transform:scaleX(0.8977);transform-origin:0 0;">Nữ</div>
<div class="t" style="left:715px;top:311.30px;font-size:17.6px;font-weight:400;color:#222;transform:scaleX(1.1489);transform-origin:0 0;">01/02/1980</div>
<div class="t" style="left:853px;top:311.30px;font-size:17.6px;font-weight:400;color:#222;transform:scaleX(1.0076);transform-origin:0 0;">Phó trưởng phòng</div>
<div class="t" style="left:1390px;top:311.30px;font-size:17.6px;font-weight:400;color:#222;transform:scaleX(1.03);transform-origin:0 0;">Phòng Xây dựng Chính quyền</div>
<div class="a" style="left:0px;top:379px;width:1545px;height:1px;background:#e9e9e9;"></div>
<div class="a" style="left:15px;top:349px;width:20px;height:21px;border-radius:5px;background:#fff;border:1px solid #cfcfcf;"></div>
<svg class="a" style="left:65px;top:351.2px;" width="20" height="18" viewBox="0 0 20 18"><path d="M10 0.9L19.5 17.2H0.5Z" fill="#ff9a0d" stroke="#ff9a0d" stroke-width="0.8" stroke-linejoin="round"/><rect x="9.05" y="6.7" width="1.9" height="4.8" fill="#fff"/><rect x="9.05" y="12.8" width="1.9" height="1.9" fill="#fff"/></svg>
<div class="t" style="left:115px;top:352.30px;font-size:17.6px;font-weight:400;color:#222;transform:scaleX(1.0129);transform-origin:0 0;">Viên chức</div>
<div class="t" style="left:265px;top:352.30px;font-size:17.6px;font-weight:400;color:#222;transform:scaleX(1.0346);transform-origin:0 0;">SHCBVC0001</div>
<div class="t" style="left:415px;top:352.30px;font-size:17.6px;font-weight:400;color:#222;transform:scaleX(1.0028);transform-origin:0 0;">Trần Hải Đăng</div>
<div class="t" style="left:615px;top:352.30px;font-size:17.6px;font-weight:400;color:#222;transform:scaleX(0.9683);transform-origin:0 0;">Nam</div>
<div class="t" style="left:715px;top:352.30px;font-size:17.6px;font-weight:400;color:#222;transform:scaleX(1.1489);transform-origin:0 0;">15/07/1975</div>
<div class="t" style="left:853px;top:352.30px;font-size:17.6px;font-weight:400;color:#222;transform:scaleX(0.9764);transform-origin:0 0;">Tổ trưởng</div>
<div class="t" style="left:1390px;top:352.30px;font-size:17.6px;font-weight:400;color:#222;transform:scaleX(1.03);transform-origin:0 0;">Phòng Công chức Viên chức</div>
<div class="a" style="left:0px;top:420px;width:1545px;height:1px;background:#e9e9e9;"></div>
<div class="a" style="left:15px;top:390px;width:20px;height:21px;border-radius:5px;background:#fff;border:1px solid #cfcfcf;"></div>
<svg class="a" style="left:65px;top:392.2px;" width="20" height="18" viewBox="0 0 20 18"><path d="M10 0.9L19.5 17.2H0.5Z" fill="#ff9a0d" stroke="#ff9a0d" stroke-width="0.8" stroke-linejoin="round"/><rect x="9.05" y="6.7" width="1.9" height="4.8" fill="#fff"/><rect x="9.05" y="12.8" width="1.9" height="1.9" fill="#fff"/></svg>
<div class="t" style="left:115px;top:393.30px;font-size:17.6px;font-weight:400;color:#222;transform:scaleX(1.0129);transform-origin:0 0;">Viên chức</div>
<div class="t" style="left:265px;top:393.30px;font-size:17.6px;font-weight:400;color:#222;transform:scaleX(1.0483);transform-origin:0 0;">SHCB0022</div>
<div class="t" style="left:415px;top:393.30px;font-size:17.6px;font-weight:400;color:#222;transform:scaleX(0.9794);transform-origin:0 0;">Trần Văn Nhượng</div>
<div class="t" style="left:615px;top:393.30px;font-size:17.6px;font-weight:400;color:#222;transform:scaleX(0.9683);transform-origin:0 0;">Nam</div>
<div class="t" style="left:715px;top:393.30px;font-size:17.6px;font-weight:400;color:#222;transform:scaleX(1.1489);transform-origin:0 0;">15/03/1958</div>
<div class="t" style="left:1121px;top:393.30px;font-size:17.6px;font-weight:400;color:#222;transform:scaleX(1.0229);transform-origin:0 0;">Chuyên viên</div>
<div class="t" style="left:1390px;top:393.30px;font-size:17.6px;font-weight:400;color:#222;transform:scaleX(1.03);transform-origin:0 0;">Phòng Cải cách Hành chính</div>
</div>
<div class="a" style="left:355px;top:612px;width:1538px;height:8px;background:#f7f7f7;"></div>
<div class="a" style="left:355px;top:612px;width:851px;height:7px;border-radius:4px;background:#cdcdcd;"></div>
<div class="a" style="left:1893px;top:302px;width:7px;height:310px;background:#f5f5f5;"></div>
<div class="a" style="left:1893px;top:302px;width:7px;height:233px;border-radius:4px;background:#cdcdcd;"></div>
<div class="t" style="left:377px;top:636.10px;font-size:17.6px;font-weight:400;color:#222;transform:scaleX(1.04);transform-origin:0 0;">Tổng số: <b style="font-weight:700">39</b></div>
<div class="t" style="left:1408.5px;top:636.60px;font-size:17.6px;font-weight:400;color:#222;letter-spacing:0.6px;">Số dòng/trang</div>
<div class="a" style="left:1541px;top:624px;width:80px;height:40px;border-radius:10px;background:#fff;border:1px solid #d4d4d4;"></div>
<div class="t" style="left:1557px;top:636.10px;font-size:17.6px;font-weight:400;color:#222;">10</div>
<svg class="a" style="left:1596px;top:639px;" width="13" height="11" viewBox="0 0 13 11"><path d="M1.5 2.2L6.5 7.6l5-5.4" fill="none" stroke="#333" stroke-width="1.6" stroke-linecap="round" stroke-linejoin="round"/></svg>
<div class="t" style="left:1645.5px;top:636.10px;font-size:17.6px;font-weight:700;color:#222;">1</div>
<div class="t" style="left:1664.5px;top:636.10px;font-size:17.6px;font-weight:400;color:#222;">-</div>
<div class="t" style="left:1678.5px;top:636.10px;font-size:17.6px;font-weight:700;color:#222;">10</div>
<svg class="a" style="left:1727px;top:637px;" width="12" height="15" viewBox="0 0 12 15"><rect x="0.5" y="1" width="2" height="13" fill="#b5b5b5"/><path d="M11 1v13L3 7.5z" fill="#b5b5b5"/></svg>
<svg class="a" style="left:1769px;top:638px;" width="16" height="13" viewBox="0 0 16 13"><path d="M8 0.5v12L1 6.5zM15.5 0.5v12L8.5 6.5z" fill="#b5b5b5"/></svg>
<svg class="a" style="left:1812px;top:638px;" width="16" height="13" viewBox="0 0 16 13"><path d="M0.5 0.5v12L7.5 6.5zM8 0.5v12l7-6z" fill="#333"/></svg>
<svg class="a" style="left:1856px;top:637px;" width="12" height="15" viewBox="0 0 12 15"><path d="M1 1v13l8-6.5z" fill="#333"/><rect x="9.5" y="1" width="2" height="13" fill="#333"/></svg>
<div class="a" style="left:344px;top:515px;width:10px;height:70px;border-radius:5px;background:#3358ff;"></div>
<svg class="a" style="left:345px;top:543px;" width="8" height="14" viewBox="0 0 8 14"><path d="M2.2 1.8L6 7l-3.8 5.2" fill="none" stroke="#fff" stroke-width="1.9" stroke-linecap="round" stroke-linejoin="round"/></svg>
<div class="a" style="left:1900px;top:478px;width:20px;height:120px;border-radius:8px 0 0 8px;background:#4262f2;"></div>
<svg class="a" style="left:1905px;top:529px;" width="10" height="16" viewBox="0 0 10 16"><path d="M8 2.8L3.2 8.4L8 14" fill="none" stroke="#fff" stroke-width="2.4" stroke-linecap="round" stroke-linejoin="round"/></svg>
<div class="a" style="left:355px;top:675px;width:1545px;height:259px;border-radius:12px;background:#fff;overflow:hidden;">
<div class="a" style="left:0px;top:0px;width:1458px;height:44px;background:#f7f7f7;"></div>
<div class="a" style="left:0px;top:0px;width:1458px;height:40px;background:#f4f4f4;"></div>
<div class="a" style="left:0px;top:40px;width:1458px;height:1px;background:#cdcdcd;"></div>
<div class="a" style="left:0px;top:44px;width:1545px;height:215px;border:1px solid #cfcfcf;border-right:none;border-radius:8px 0 0 10px;background:#fff;overflow:hidden;">
<div class="a" style="left:0px;top:0px;width:115px;height:169px;background:#f2f2f2;"></div>
</div>
</div>
<svg class="a" style="left:365px;top:688px;" width="17" height="18" viewBox="0 0 17 18"><path d="M16 0.5v17L0.5 9z" fill="#c8c8c8"/></svg>
<div class="t" style="left:411px;top:685.52px;font-size:16.4px;font-weight:700;color:#1f1f1f;transform:scaleX(1.0027);transform-origin:0 0;">THÔNG TIN CHUNG</div>
<div class="t" style="left:603px;top:685.52px;font-size:16.4px;font-weight:700;color:#4d4d4d;transform:scaleX(0.9813);transform-origin:0 0;">QUÁ TRÌNH CÔNG TÁC</div>
<div class="t" style="left:819.6px;top:685.52px;font-size:16.4px;font-weight:700;color:#4d4d4d;transform:scaleX(0.9570);transform-origin:0 0;">LƯƠNG, PHỤ CẤP</div>
<div class="t" style="left:996px;top:685.52px;font-size:16.4px;font-weight:700;color:#4d4d4d;transform:scaleX(0.9494);transform-origin:0 0;">ĐÀO TẠO, BỒI DƯỠNG</div>
<div class="t" style="left:1205.7px;top:685.52px;font-size:16.4px;font-weight:700;color:#4d4d4d;transform:scaleX(0.9832);transform-origin:0 0;">CHỨNG CHỈ</div>
<div class="t" style="left:1335.6px;top:685.52px;font-size:16.4px;font-weight:700;color:#4d4d4d;transform:scaleX(0.9713);transform-origin:0 0;">KHEN THƯỞNG</div>
<div class="t" style="left:1494.5px;top:685.52px;font-size:16.4px;font-weight:700;color:#4d4d4d;transform:scaleX(0.9724);transform-origin:0 0;">KỶ LUẬT</div>
<div class="t" style="left:1602.1px;top:685.52px;font-size:16.4px;font-weight:700;color:#4d4d4d;transform:scaleX(1.0097);transform-origin:0 0;">THÔNG TIN THÂN NHÂN</div>
<div class="a" style="left:393px;top:713px;width:192px;height:3px;background:#3358ff;"></div>
<svg class="a" style="left:1836px;top:689px;" width="16" height="17" viewBox="0 0 16 17"><path d="M0.5 0.5v16L15.5 8.5z" fill="#3a78d0"/></svg>
<svg class="a" style="left:1872px;top:690px;" width="22" height="8" viewBox="0 0 22 8"><g fill="#3a78d0"><circle cx="3.2" cy="4" r="2.6"/><circle cx="11" cy="4" r="2.6"/><circle cx="18.8" cy="4" r="2.6"/></g></svg>
<svg class="a" style="left:370px;top:750px;" width="86" height="96" viewBox="0 0 86 96"><path fill="#9b9b9b" d="M43 2.5C33 2.5 25.6 7 25.6 18.5V42c0 9 4.6 17 12.4 21.6V68C19 70 3.5 77 2.4 94.5h81.2C82.5 77 67 70 48 68v-4.4C55.8 59 60.4 51 60.4 42V18.5C60.4 7 53 2.5 43 2.5z"/></svg>
<div class="t" style="left:480px;top:737.10px;font-size:17.6px;font-weight:400;color:#222;transform:scaleX(1.0074);transform-origin:0 0;">Mã hồ sơ</div>
<div class="t" style="left:480px;top:776.10px;font-size:17.6px;font-weight:400;color:#222;transform:scaleX(1.0321);transform-origin:0 0;">Số hiệu cán bộ</div>
<div class="t" style="left:627.6px;top:776.10px;font-size:17.6px;font-weight:400;color:#1a1a1a;-webkit-text-stroke:0.3px #1a1a1a;transform:scaleX(1.0493);transform-origin:0 0;">dktrang@yopmail.com</div>
<div class="t" style="left:480px;top:814.10px;font-size:17.6px;font-weight:400;color:#222;transform:scaleX(1.0288);transform-origin:0 0;">Họ và tên</div>
<div class="t" style="left:627.6px;top:814.10px;font-size:17.6px;font-weight:400;color:#1a1a1a;-webkit-text-stroke:0.3px #1a1a1a;transform:scaleX(1.0094);transform-origin:0 0;">Dương Kiều Trang</div>
<div class="t" style="left:480px;top:853.10px;font-size:17.6px;font-weight:400;color:#222;transform:scaleX(1.0349);transform-origin:0 0;">Ngày sinh</div>
<div class="t" style="left:627.6px;top:853.10px;font-size:17.6px;font-weight:400;color:#1a1a1a;-webkit-text-stroke:0.3px #1a1a1a;transform:scaleX(1.1636);transform-origin:0 0;">01/01/1990</div>
<div class="t" style="left:480px;top:892.10px;font-size:17.6px;font-weight:400;color:#222;transform:scaleX(1.0307);transform-origin:0 0;">Chức vụ</div>
<div class="t" style="left:846px;top:737.10px;font-size:17.6px;font-weight:400;color:#222;transform:scaleX(1.0031);transform-origin:0 0;">Số CCCD</div>
<div class="t" style="left:846px;top:776.10px;font-size:17.6px;font-weight:400;color:#222;transform:scaleX(1.0125);transform-origin:0 0;">Số CMND</div>
<div class="t" style="left:846px;top:814.10px;font-size:17.6px;font-weight:400;color:#222;transform:scaleX(1.0575);transform-origin:0 0;">Ngạch</div>
<div class="t" style="left:846px;top:853.10px;font-size:17.6px;font-weight:400;color:#222;transform:scaleX(1.0789);transform-origin:0 0;">Bậc - Hệ số</div>
<div class="a" style="left:1894px;top:721px;width:5px;height:197px;background:#f5f5f5;"></div>
<div class="a" style="left:1894px;top:721px;width:5px;height:143px;border-radius:3px;background:#cdcdcd;"></div>
<svg class="a" style="left:1105px;top:668px;" width="46" height="8" viewBox="0 0 46 8"><path d="M6.2 1.3H39.7L44.7 6.4H1.3Z" fill="#e9e9e9" stroke="#cfcfcf" stroke-width="1"/><path d="M19.9 5.9L22.9 2L25.9 5.9Z" fill="#444"/></svg>
</body></html>
